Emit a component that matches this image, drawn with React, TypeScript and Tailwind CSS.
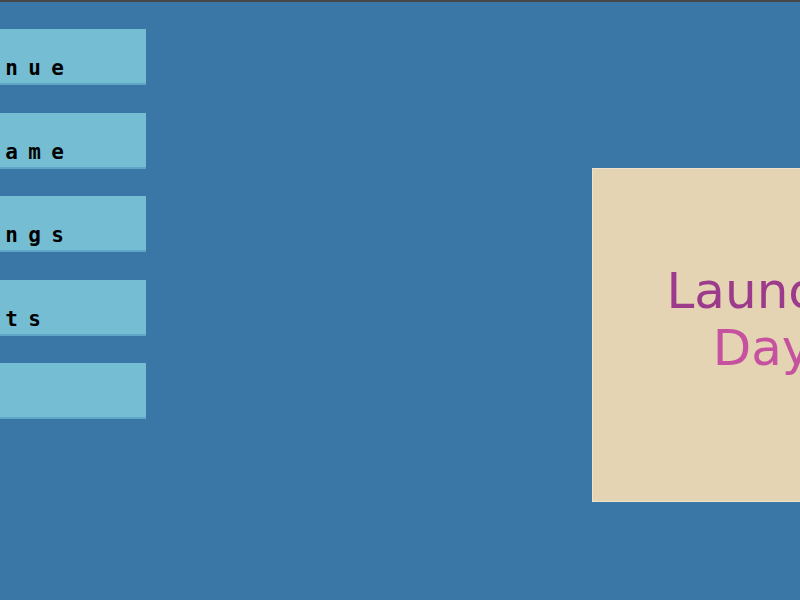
const menu = ["Continue", "New Game", "Settings", "Credits", "Quit"];

export default function App() {
  return (
    <div className="w-[800px] h-[600px] overflow-hidden bg-[#3a77a7] border-t-2 border-[#464646] flex">
      {/* Menu buttons, pushed partly off the left edge */}
      <div className="flex flex-col gap-[27.5px] pt-[27px] w-[146px] shrink-0">
        {menu.map((label) => (
          <button
            key={label}
            className="-ml-[154px] w-[300px] h-[56px] shrink-0 bg-[#74bdd3] border-b-2 border-[#5ea5c6] flex items-end pl-[44px] pb-[5px] text-black text-left"
          >
            <span
              className="text-[21px] leading-[20px] font-bold tracking-[10.4px]"
              style={{ fontFamily: '"DejaVu Sans Mono", monospace' }}
            >
              {label}
            </span>
          </button>
        ))}
      </div>

      {/* Title card */}
      <div className="ml-[446px] mt-[166px] w-[334px] h-[334px] shrink-0 bg-[#e5d4b3] border border-[#efe3cc] flex flex-col items-center justify-center pb-[30px]">
        <p
          className="text-[50px] leading-[57px] text-[#9c3a8c] text-center mr-[4px]"
          style={{ fontFamily: '"DejaVu Sans", sans-serif' }}
        >
          Launch
        </p>
        <p
          className="text-[50px] leading-[57px] text-[#c6519f] text-center ml-[6px]"
          style={{ fontFamily: '"DejaVu Sans", sans-serif' }}
        >
          Day
        </p>
      </div>
    </div>
  );
}
